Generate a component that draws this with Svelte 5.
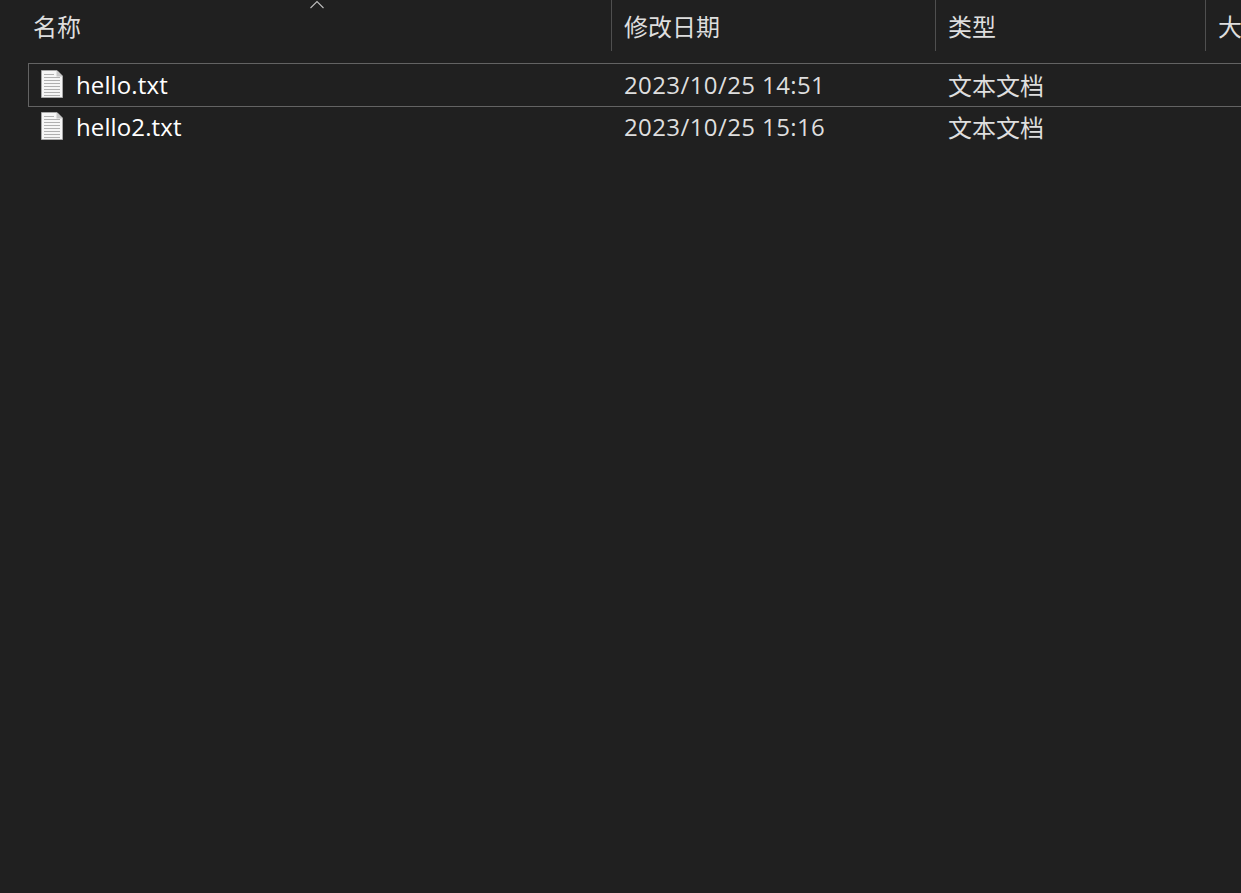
<script>
    const files = [
        { name: 'hello.txt', date: '2023/10/25 14:51', type: '文本文档', selected: true },
        { name: 'hello2.txt', date: '2023/10/25 15:16', type: '文本文档', selected: false }
    ];
</script>

<main>
    <div class="header">
        <div class="col name-col">
            <span>名称</span>
            <svg class="sort" width="16" height="9" viewBox="0 0 16 9">
                <path d="M1.5 8 L8 1.5 L14.5 8" fill="none" stroke="#bdbdbd" stroke-width="1.1" />
            </svg>
        </div>
        <div class="col date-col">修改日期</div>
        <div class="col type-col">类型</div>
        <div class="col size-col">大小</div>
    </div>

    <div class="list">
        {#each files as file}
            <div class="row" class:selected={file.selected}>
                <div class="file">
                    <svg class="icon" width="22" height="28" viewBox="0 0 22 28">
                        <path d="M.5 .5 H16 L21.5 6 V27.5 H.5 Z" fill="#f6f6f6" stroke="#a8a8a8" />
                        <path d="M15.5 .5 V6.5 H21.5 Z" fill="#c8c8c8" />
                        <path d="M3 4.5 H13 M3 7.5 H19 M3 10.5 H19 M3 13.5 H19 M3 16.5 H19 M3 19.5 H19 M3 22.5 H19 M3 25.5 H19" stroke="#b0b0b0" fill="none" />
                    </svg>
                    <span class="fname">{file.name}</span>
                </div>
                <div class="date">{file.date}</div>
                <div class="type">{file.type}</div>
            </div>
        {/each}
    </div>
</main>

<style>
    :global(body) {
        background: #202020;
    }

    main {
        height: 893px;
        width: 1241px;
        overflow: hidden;
        background: #202020;
        color: #dedede;
        font-family: "Open Sans", "Noto Sans CJK SC", sans-serif;
        font-size: 24px;
    }

    .header {
        display: grid;
        grid-template-columns: 612px 324px 270px 1fr;
        height: 63px;
        align-items: start;
    }

    .col {
        position: relative;
        height: 51px;
        line-height: 53px;
        padding-left: 12px;
        white-space: nowrap;
        overflow: hidden;
        box-sizing: border-box;
        border-right: 1px solid #4f4f4f;
    }

    .name-col {
        padding-left: 33px;
    }

    .size-col {
        border-right: none;
    }

    .sort {
        position: absolute;
        left: 309px;
        top: 0;
    }

    .row {
        display: grid;
        grid-template-columns: 583px 324px 1fr;
        margin-left: 28px;
        height: 44px;
        margin-bottom: -2px;
        padding-bottom: 2px;
        box-sizing: border-box;
        border: 1px solid transparent;
        border-right: none;
        align-items: center;
    }

    .row.selected {
        border-color: #636363;
    }

    .file {
        display: flex;
        align-items: center;
        gap: 13px;
        padding-left: 12px;
    }

    .fname {
        color: #fff;
        letter-spacing: 0.12px;
    }

    .icon {
        flex: none;
    }

    .date, .type {
        padding-left: 12px;
    }

    .date {
        letter-spacing: 0.4px;
    }
</style>
